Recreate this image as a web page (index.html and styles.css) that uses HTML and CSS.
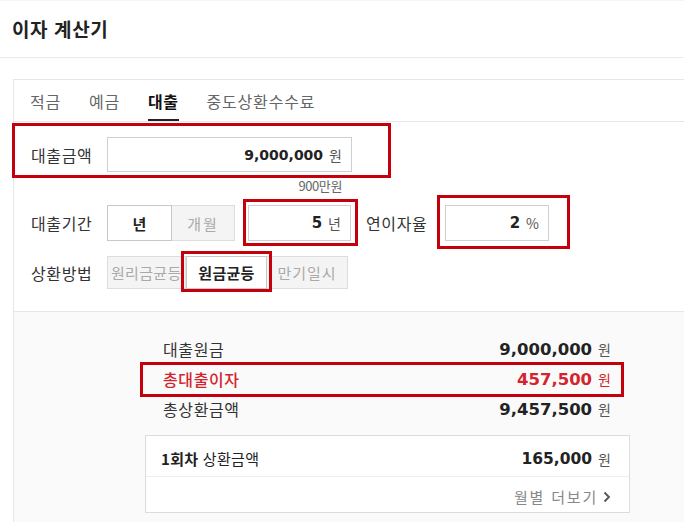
FILE: index.html
```html
<!DOCTYPE html>
<html lang="ko">
<head>
<meta charset="utf-8">
<title>이자 계산기</title>
<link rel="stylesheet" href="styles.css">
</head>
<body>
<div class="page">
  <header class="head"><h1 class="title">이자 계산기</h1></header>
  <section class="card">
    <nav class="tabs">
      <span class="tab">적금</span>
      <span class="tab">예금</span>
      <span class="tab active">대출</span>
      <span class="tab">중도상환수수료</span>
    </nav>
    <div class="form">
      <div class="row row-amount">
        <span class="label">대출금액</span>
        <div class="input wide"><b class="num">9,000,000</b><span class="unit">원</span></div>
      </div>
      <div class="hint">900만원</div>
      <div class="row row-term">
        <span class="label">대출기간</span>
        <div class="seg seg-term"><span class="opt on">년</span><span class="opt">개월</span></div>
        <div class="input short"><b class="num big">5</b><span class="unit">년</span></div>
        <span class="label label-rate">연이자율</span>
        <div class="input rate"><b class="num big">2</b><span class="unit">%</span></div>
      </div>
      <div class="row row-method">
        <span class="label">상환방법</span>
        <div class="seg seg-method"><span class="opt">원리금균등</span><span class="opt on">원금균등</span><span class="opt">만기일시</span></div>
      </div>
    </div>
    <div class="result">
      <div class="result-inner">
        <div class="sum-row"><span class="sum-label">대출원금</span><span class="sum-val"><b class="num">9,000,000</b><span class="unit">원</span></span></div>
        <div class="sum-row hot"><span class="sum-label">총대출이자</span><span class="sum-val"><b class="num">457,500</b><span class="unit">원</span></span></div>
        <div class="sum-row"><span class="sum-label">총상환금액</span><span class="sum-val"><b class="num">9,457,500</b><span class="unit">원</span></span></div>
        <div class="pay-box">
          <div class="pay-row"><span class="pay-label"><b>1회차</b> 상환금액</span><span class="sum-val"><b class="num mid">165,000</b><span class="unit">원</span></span></div>
          <div class="more-row"><span class="more">월별 더보기</span><svg class="chev" width="8" height="12" viewBox="0 0 8 12"><path d="M1.5 1.5 L6 6 L1.5 10.5" fill="none" stroke="#555" stroke-width="1.8"/></svg></div>
        </div>
      </div>
    </div>
  </section>
  <div class="marks">
    <div class="mark m1"></div>
    <div class="mark m2"></div>
    <div class="mark m3"></div>
    <div class="mark m4"></div>
    <div class="mark m5"></div>
  </div>
</div>
</body>
</html>
```
FILE: styles.css
```css
* { box-sizing: border-box; }
html, body { margin: 0; padding: 0; background: #fff; }
body {
  font-family: "Noto Sans CJK KR", "Noto Sans", sans-serif;
  color: #333;
  overflow: hidden;
}
.page { position: relative; width: 684px; height: 522px; overflow: hidden; }

.head {
  height: 58px;
  border-top: 1px solid #f4f4f4;
  border-bottom: 1px solid #ebebeb;
  padding-left: 12px;
  display: flex;
  align-items: center;
}
.title { margin: 0; font-size: 19px; font-weight: 700; color: #222; line-height: 24px; letter-spacing: 0.6px; }

.card {
  margin: 21px 0 0 13px;
  border: 1px solid #e6e6e6;
  border-right: none;
  border-bottom: none;
}

.tabs {
  display: flex;
  gap: 28px;
  padding-left: 16px;
  height: 42px;
  border-bottom: 1px solid #e6e6e6;
}
.tab {
  display: flex;
  align-items: center;
  height: 41px;
  padding-top: 2px;
  border-bottom: 2px solid transparent;
  font-size: 16px;
  letter-spacing: 0.8px;
  color: #666;
  line-height: 20px;
}
.tab.active { color: #111; font-weight: 700; border-bottom-color: #222; letter-spacing: 0.5px; }

.form { padding: 15px 0 22px; }
.row { display: flex; align-items: center; }
.label {
  width: 93px;
  padding-left: 17px;
  font-size: 16px;
  letter-spacing: 0.6px;
  color: #333;
  line-height: 20px;
  white-space: nowrap;
}
.input {
  display: flex;
  justify-content: flex-end;
  align-items: center;
  border: 1px solid #cfcfcf;
  background: #fff;
  padding-right: 9px;
}
.input.wide { width: 245px; height: 35px; }
.input.short { width: 103px; height: 36px; margin-left: 13px; }
.input.rate { width: 104px; height: 36px; }
.num {
  font-family: "DejaVu Sans", "Verdana", sans-serif;
  font-weight: 700;
  color: #222;
  font-size: 14px;
}
.num.big { font-size: 15px; }
.num.mid { font-size: 15.5px; }
.unit { font-size: 14px; color: #555; margin-left: 6px; line-height: 18px; }

.hint {
  width: 328px;
  text-align: right;
  font-size: 13px;
  color: #666;
  line-height: 16px;
  margin-top: 6px;
  letter-spacing: -0.4px;
}

.row-term { margin-top: 11px; height: 36px; }
.label-rate { width: 79px; padding-left: 0; margin-left: 15px; }

.seg { display: flex; }
.opt {
  display: flex;
  align-items: center;
  justify-content: center;
  background: #f4f4f4;
  border: 1px solid #dddddd;
  color: #aaa;
  font-size: 15px;
  letter-spacing: 0.3px;
  white-space: nowrap;
  overflow: hidden;
}
.opt + .opt { border-left: none; }
.opt.on { background: #fff; border-color: #c8c8c8; color: #222; font-weight: 700; }
.seg-term { height: 36px; }
.seg-term .opt:first-child { width: 65px; }
.seg-term .opt:last-child { width: 63px; letter-spacing: 2px; }
.seg-term .opt.on { border-right: 1px solid #c8c8c8; }
.seg-term .opt.on + .opt { border-left: none; }

.row-method { margin-top: 15px; height: 33px; }
.seg-method { height: 33px; }
.seg-method .opt { width: 81px; }
.seg-method .opt:first-child { width: 79px; justify-content: flex-start; padding-left: 3px; }
.seg-method .opt:last-child { letter-spacing: 1px; }
.seg-method .opt.on { border-left: 1px solid #c8c8c8; }

.result {
  border-top: 1px solid #e6e6e6;
  background: #fafafa;
  padding-top: 22px;
  height: 220px;
}
.result-inner { margin-left: 131px; width: 485px; }
.sum-row {
  display: flex;
  justify-content: space-between;
  align-items: center;
  height: 30px;
  padding: 0 19px 0 18px;
}
.sum-label { font-size: 16px; letter-spacing: 0.6px; color: #333; line-height: 20px; }
.sum-val { display: flex; align-items: center; }
.sum-row .num { font-size: 16.5px; }
.sum-row.hot .sum-label, .sum-row.hot .num, .sum-row.hot .unit { color: #d3252d; }
.sum-row.hot .sum-label { font-weight: 500; }

.pay-box { margin-top: 11px; border: 1px solid #dcdcdc; background: #fff; }
.pay-row {
  display: flex;
  justify-content: space-between;
  align-items: center;
  height: 41px;
  padding: 6px 18px 0 15px;
  border-bottom: 1px solid #eeeeee;
}
.pay-label { font-size: 15px; color: #222; line-height: 20px; letter-spacing: 0.3px; }
.more-row {
  display: flex;
  justify-content: flex-end;
  align-items: center;
  height: 35px;
  padding: 4px 18px 0 0;
}
.more { font-size: 15px; color: #888; line-height: 20px; letter-spacing: 1.8px; }
.chev { margin-left: 5px; }

.mark { position: absolute; border: 3px solid #c4000d; }
.m1 { left: 12px; top: 123px; width: 379px; height: 55px; }
.m2 { left: 243px; top: 199px; width: 115px; height: 47px; }
.m3 { left: 437px; top: 195px; width: 133px; height: 54px; }
.m4 { left: 181px; top: 251px; width: 91px; height: 41px; }
.m5 { left: 140px; top: 362px; width: 484px; height: 35px; }
```
